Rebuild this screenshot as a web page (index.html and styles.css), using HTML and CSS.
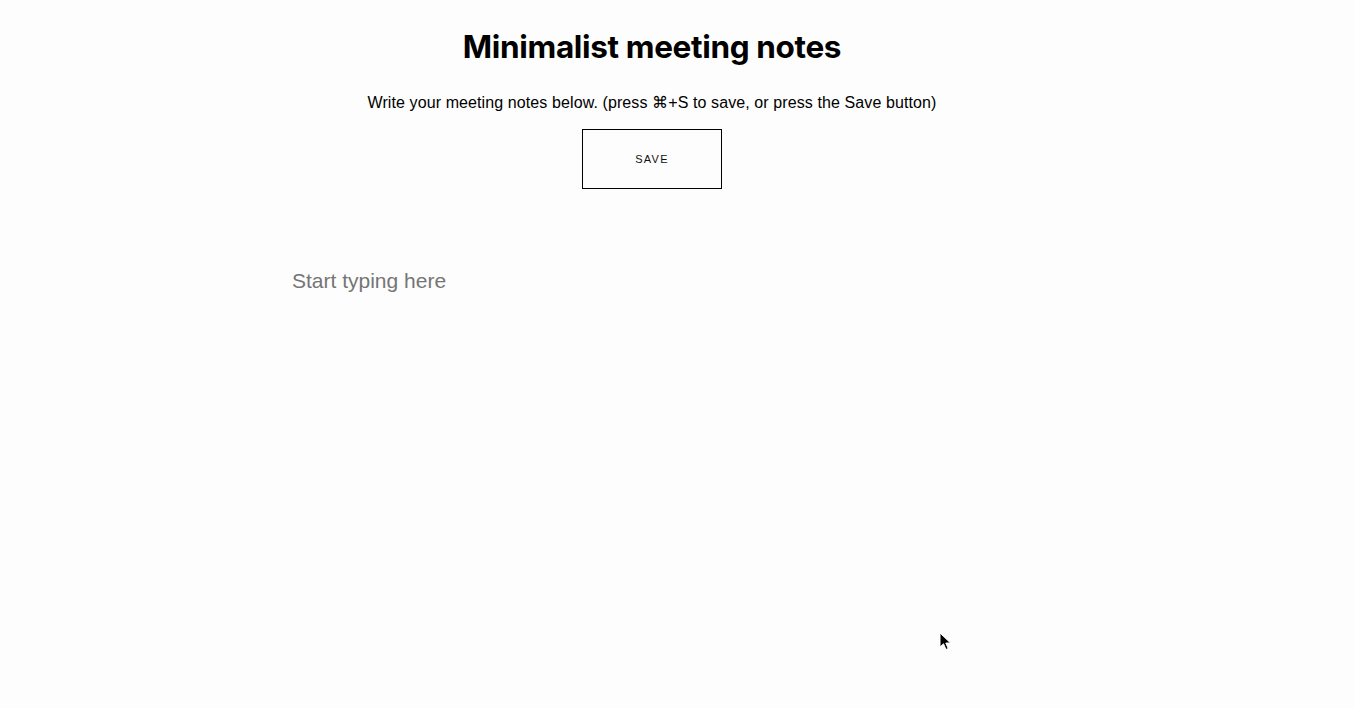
FILE: index.html
```html
<!DOCTYPE html>
<html lang="en">
<head>
<meta charset="utf-8">
<title>Minimalist meeting notes</title>
<link rel="stylesheet" href="styles.css">
</head>
<body>
<div class="page">
  <main class="notes">
    <h1 class="title">Minimalist meeting notes</h1>
    <p class="intro">Write your meeting notes below. (press ⌘+S to save, or press the Save button)</p>
    <button class="save" type="button">SAVE</button>
    <div class="editor" contenteditable="true" data-placeholder="Start typing here"></div>
  </main>
</div>
<svg class="cursor" width="14" height="20" viewBox="0 0 14 20" aria-hidden="true">
  <path d="M1 1 L1 15 L4.5 11.8 L7 17.5 L9.2 16.5 L6.8 11 L11.5 11 Z" fill="#000" stroke="#fff" stroke-width="1"/>
</svg>
</body>
</html>
```

FILE: styles.css
```css
html, body {
  margin: 0;
  padding: 0;
  background: #fdfdfd;
  height: 100%;
}
body {
  font-family: "Liberation Sans", Arial, sans-serif;
  color: #000;
  overflow: hidden;
}
.page {
  display: flex;
  justify-content: center;
  padding-right: 50px;
}
.notes {
  width: 720px;
  display: flex;
  flex-direction: column;
  align-items: center;
}
.title {
  font-family: Inter, "Liberation Sans", sans-serif;
  font-weight: 700;
  font-size: 31.5px;
  line-height: 40px;
  margin: 27px 0 0;
  letter-spacing: -0.35px;
}
.intro {
  font-size: 16px;
  line-height: 20px;
  letter-spacing: 0.1px;
  margin: 26px 0 0;
}
.save {
  margin-top: 16px;
  width: 140px;
  height: 60px;
  border: 1px solid #000;
  background: transparent;
  font-family: "Liberation Sans", Arial, sans-serif;
  font-size: 11px;
  letter-spacing: 1.3px;
  color: #111;
  padding: 0;
}
.editor {
  align-self: stretch;
  margin-top: 70px;
  font-size: 21px;
  line-height: 44px;
  min-height: 300px;
  outline: none;
}
.editor:empty::before {
  content: attr(data-placeholder);
  color: #757575;
}
.cursor {
  position: absolute;
  left: 939px;
  top: 632px;
}
```
